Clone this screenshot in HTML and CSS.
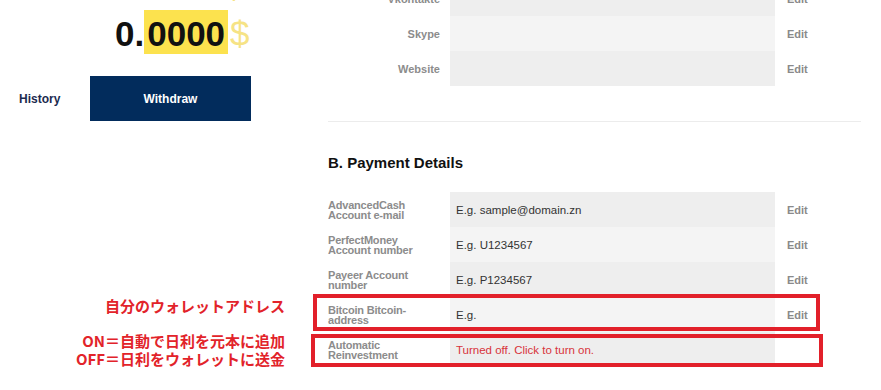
FILE: index.html
```html
<!DOCTYPE html>
<html lang="en">
<head>
    <meta charset="UTF-8">
    <meta name="viewport" content="width=device-width, initial-scale=1.0">
    <title>Profile</title>
    <link rel="stylesheet" href="styles.css">
</head>
<body>
    <div class="page">
        <div class="side">
            <div class="balance prev">
                <span class="num">0.0000</span>
                <span class="cur">$</span>
            </div>
            <div class="balance">
                <span class="num">0.</span>
                <span class="num hl">0000</span>
                <span class="cur">$</span>
            </div>
            <div class="actions">
                <a class="link-history" href="#">History</a>
                <button class="btn-withdraw">Withdraw</button>
            </div>
            <div class="notes">
                <p class="note">自分のウォレットアドレス</p>
                <p class="note note-two">ON＝自動で日利を元本に追加<br>OFF＝日利をウォレットに送金</p>
            </div>
        </div>

        <div class="main">
            <div class="rows rows-contacts">
                <div class="row">
                    <div class="label">Vkontakte</div>
                    <div class="field"></div>
                    <a class="edit" href="#">Edit</a>
                </div>
                <div class="row">
                    <div class="label">Skype</div>
                    <div class="field"></div>
                    <a class="edit" href="#">Edit</a>
                </div>
                <div class="row">
                    <div class="label">Website</div>
                    <div class="field"></div>
                    <a class="edit" href="#">Edit</a>
                </div>
            </div>

            <hr class="divider">

            <h2 class="section-title">B. Payment Details</h2>

            <div class="rows rows-payment">
                <div class="row">
                    <div class="label">AdvancedCash Account e-mail</div>
                    <div class="field">E.g. sample@domain.zn</div>
                    <a class="edit" href="#">Edit</a>
                </div>
                <div class="row">
                    <div class="label">PerfectMoney Account number</div>
                    <div class="field">E.g. U1234567</div>
                    <a class="edit" href="#">Edit</a>
                </div>
                <div class="row">
                    <div class="label">Payeer Account number</div>
                    <div class="field">E.g. P1234567</div>
                    <a class="edit" href="#">Edit</a>
                </div>
                <div class="row mark mark-wallet">
                    <div class="label">Bitcoin Bitcoin-address</div>
                    <div class="field">E.g.</div>
                    <a class="edit" href="#">Edit</a>
                </div>
                <div class="row mark mark-reinvest">
                    <div class="label">Automatic Reinvestment</div>
                    <div class="field field-off">Turned off. Click to turn on.</div>
                    <span class="edit"></span>
                </div>
            </div>
        </div>
    </div>
</body>
</html>
```

FILE: styles.css
```css
body {
    margin: 0;
    font-family: "Liberation Sans", Arial, sans-serif;
    background: #fff;
    overflow: hidden;
}
.page {
    display: flex;
}
.side {
    width: 300px;
    flex-shrink: 0;
}
.balance {
    display: flex;
    align-items: flex-start;
    padding-left: 115px;
    margin-top: 0;
    font-size: 35px;
    font-weight: bold;
    color: #111;
}
.balance.prev {
    margin-top: -37px;
    margin-bottom: 3px;
    color: transparent;
}
.balance .num,
.balance .cur {
    line-height: 40px;
    padding-top: 4px;
}
.balance .hl {
    background-color: #fce24e;
    padding-left: 3px;
    padding-right: 3px;
}
.balance .cur {
    margin-left: 2px;
    font-weight: normal;
    color: #f6e385;
}
.actions {
    display: flex;
    align-items: center;
    margin-top: 22px;
}
.link-history {
    width: 90px;
    padding-left: 19px;
    box-sizing: border-box;
    font-size: 12px;
    font-weight: bold;
    color: #1c2b4f;
    text-decoration: none;
}
.btn-withdraw {
    width: 161px;
    height: 45px;
    border: none;
    background-color: #022c5c;
    color: #fff;
    font-family: inherit;
    font-size: 12px;
    font-weight: bold;
    cursor: pointer;
}
.notes {
    padding-right: 15px;
    text-align: right;
    font-family: "Noto Sans CJK JP", sans-serif;
    font-size: 15px;
    font-weight: bold;
    line-height: 18px;
    color: #e2232a;
}
.note {
    margin: 176px 0 0;
}
.note-two {
    margin-top: 17px;
}
.main {
    flex: 1;
    margin-top: -19px;
    padding: 0 20px 0 28px;
}
.row {
    position: relative;
    display: grid;
    grid-template-columns: 122px 325px 1fr;
    height: 35px;
}
.label {
    align-self: center;
    font-size: 11px;
    font-weight: bold;
    line-height: 10px;
    color: #8c8c8c;
}
.rows-contacts .label {
    padding-right: 10px;
    text-align: right;
}
.rows-payment .label {
    padding-right: 22px;
    letter-spacing: -0.2px;
}
.field {
    display: flex;
    align-items: center;
    padding-left: 6px;
    font-size: 11.5px;
    color: #333;
    background-color: #eeeeee;
}
.row:nth-child(even) .field {
    background-color: #f4f4f4;
}
.field-off {
    color: #d8333b;
}
.edit {
    align-self: center;
    padding-left: 12px;
    font-size: 11px;
    font-weight: bold;
    color: #8a8a8a;
    text-decoration: none;
}
.divider {
    margin: 35px 0 0;
    border: none;
    border-top: 1px solid #ececec;
}
.section-title {
    margin: 32px 0 20px;
    font-size: 15px;
    line-height: 18px;
    color: #111;
}
/* red annotation frames drawn over the rows */
.mark::after {
    content: "";
    position: absolute;
    border: 4px solid #e2202a;
}
.mark-wallet::after {
    top: -3px;
    bottom: 1px;
    left: -15px;
    right: 41px;
}
.mark-reinvest::after {
    top: 2px;
    bottom: 0;
    left: -17px;
    right: 38px;
}
```
